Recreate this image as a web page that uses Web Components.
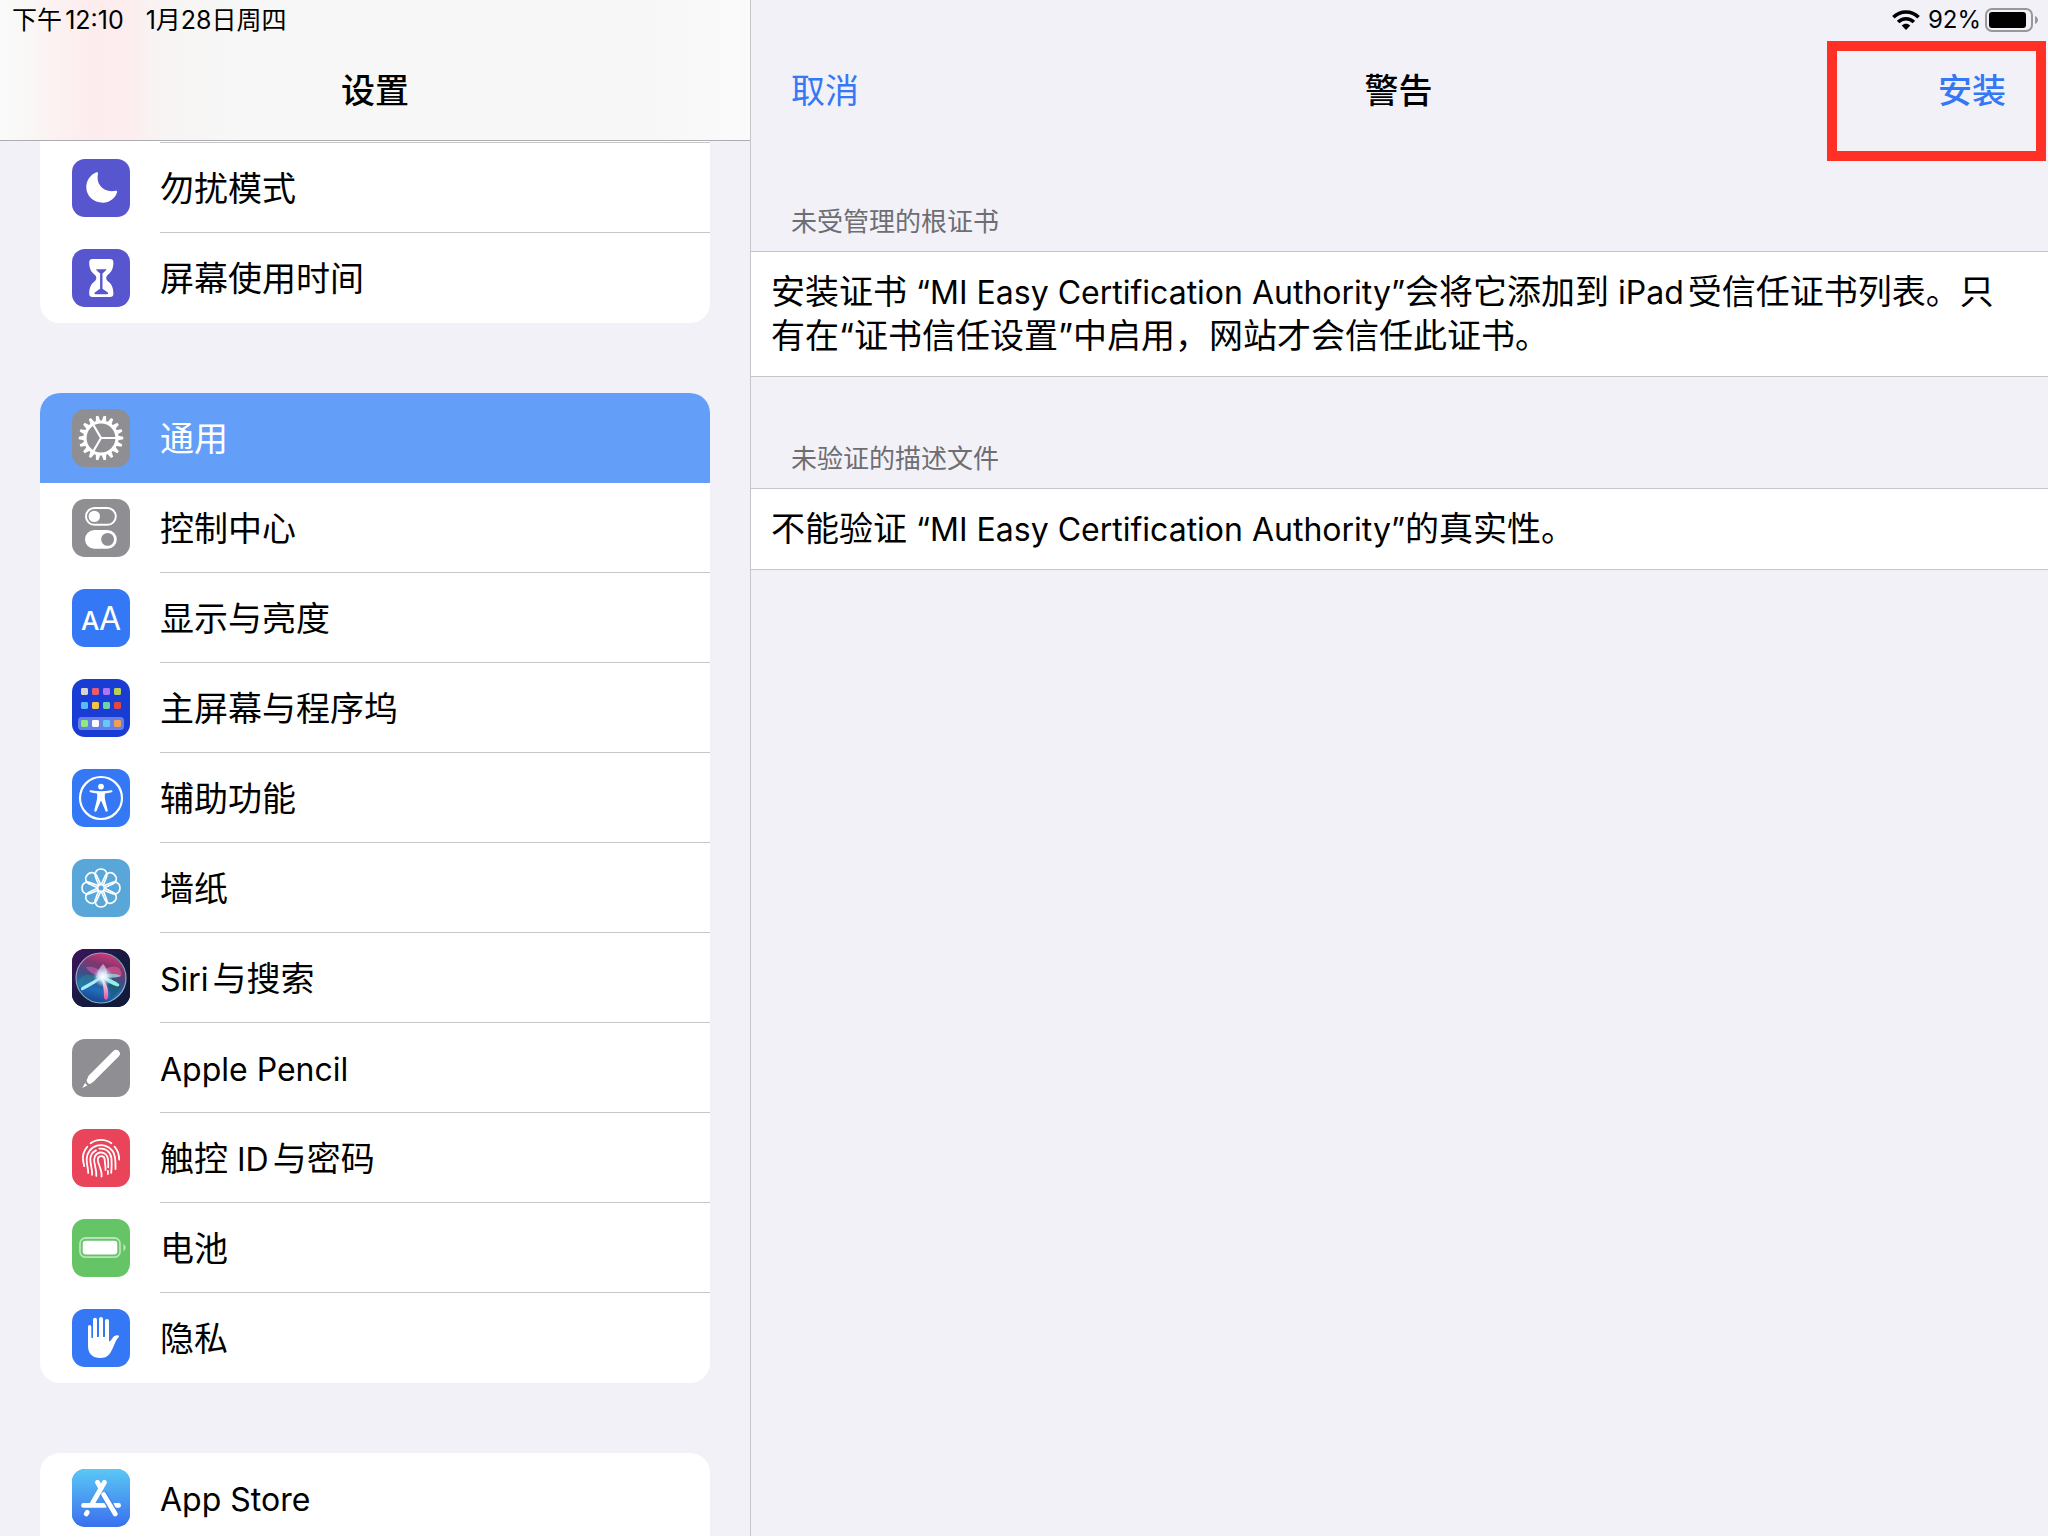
<!DOCTYPE html>
<html lang="zh-CN">
<head>
<meta charset="utf-8">
<title>设置</title>
<style>
  html, body { margin: 0; height: 100%; }
  body {
    --page: #f2f1f7;
    --line: #c6c6c8;
    --tint: #3478f6;
    --text: 34px;
    font: 34px/44px Inter, "Noto Sans CJK SC", sans-serif;
    color: #000;
    background: var(--page);
    text-autospace: normal;
    overflow: hidden;
  }
</style>
</head>
<body>
<settings-app>
  <settings-sidebar slot="sidebar">
    <status-bar slot="status"><span>下午12:10</span><span style="text-autospace: no-autospace">1月28日周四</span></status-bar>
    <span slot="title">设置</span>
    <settings-group continued>
      <settings-row icon="moon" color="#5856ce">勿扰模式</settings-row>
      <settings-row icon="hourglass" color="#5856ce" last>屏幕使用时间</settings-row>
    </settings-group>
    <settings-group>
      <settings-row icon="gear" color="#8e8e93" selected>通用</settings-row>
      <settings-row icon="toggles" color="#8e8e93">控制中心</settings-row>
      <settings-row icon="letters" color="#3478f6">显示与亮度</settings-row>
      <settings-row icon="home" color="#183cd4">主屏幕与程序坞</settings-row>
      <settings-row icon="person" color="#3478f6">辅助功能</settings-row>
      <settings-row icon="flower" color="#59a7d8">墙纸</settings-row>
      <settings-row icon="siri" color="#1b1740"><latin-text>Siri</latin-text>与搜索</settings-row>
      <settings-row icon="pencil" color="#8e8e93"><latin-text>Apple Pencil</latin-text></settings-row>
      <settings-row icon="touch" color="#ea445a">触控<latin-text>ID</latin-text>与密码</settings-row>
      <settings-row icon="battery" color="#65c466">电池</settings-row>
      <settings-row icon="hand" color="#3478f6" last>隐私</settings-row>
    </settings-group>
    <settings-group continues>
      <settings-row icon="store" color="#3f8ef2"><latin-text>App Store</latin-text></settings-row>
    </settings-group>
  </settings-sidebar>

  <warning-panel slot="detail">
    <status-bar slot="status" end><wifi-glyph></wifi-glyph><span>92%</span><battery-glyph></battery-glyph></status-bar>
    <bar-button slot="leading">取消</bar-button>
    <span slot="title">警告</span>
    <bar-button slot="trailing" strong marked>安装</bar-button>
    <notice-section>
      <span slot="heading">未受管理的根证书</span>
      安装证书<latin-text>“MI Easy Certification Authority”</latin-text>会将它添加到<latin-text>iPad</latin-text>受信任证书列表。只有在“证书信任设置”中启用，网站才会信任此证书。
    </notice-section>
    <notice-section>
      <span slot="heading">未验证的描述文件</span>
      不能验证<latin-text>“MI Easy Certification Authority”</latin-text>的真实性。
    </notice-section>
  </warning-panel>
</settings-app>

<script>
const define = (name, markup, setup) => {
  const template = document.createElement('template');
  template.innerHTML = markup;
  customElements.define(name, class extends HTMLElement {
    constructor() {
      super();
      this.attachShadow({ mode: 'open' }).append(template.content.cloneNode(true));
    }
    connectedCallback() { if (setup) setup(this, this.shadowRoot); }
  });
};

/* Gear outline with tapered teeth around a ring. */
const gearPath = (teeth, root, tip) => {
  const at = (r, a) => `${(29 + r * Math.cos(a)).toFixed(2)} ${(29 + r * Math.sin(a)).toFixed(2)}`;
  const step = Math.PI * 2 / teeth;
  const points = [];
  for (let i = 0; i < teeth; i++) {
    const a = (i + .5) * step + Math.PI / 2;
    points.push(at(root, a - step * .36), at(tip, a - step * .16), at(tip, a + step * .16), at(root, a + step * .36));
  }
  return 'M' + points.join('L') + 'Z';
};
const spin = (count, shape) => Array.from({ length: count }, (_, i) => `<g transform="rotate(${i * 360 / count} 29 29)">${shape}</g>`).join('');
const homeColors = [
  [9, '#d6d6d0', '#eb5b68', '#b074f2', '#bccf55'],
  [23, '#5ab9f8', '#f5c242', '#71d1a6', '#e2483d'],
  [41, '#8ceb79', '#ffffff', '#64c8f9', '#f09f54']
];

const icons = {
  moon: `<path fill="#fff" d="M24.6 13.3c.9-.4 1.6.3 1.4 1.2-1 4.400-.4 8.700 2.200 12.200 3.200 4.300 8.500 6.300 15.500 5.100 1-.2 1.700.5 1.400 1.400-1.900 6.200-7.700 10.500-14.300 10.500C21.500 43.700 14.300 37 14.300 28.300c0-7 4.200-12.600 10.300-15Z"/>`,
  hourglass: `<path fill="#fff" d="M20.500 10h17.500c2.200 0 3.400 1.200 3.400 3.300 0 6.500-2 9.600-5.200 12.200-2.600 2.100-2.600 4.900 0 7 3.200 2.600 5.200 5.700 5.200 12.200 0 2.100-1.200 3.300-3.400 3.300H20.500c-2.200 0-3.300-1.200-3.300-3.300 0-6.500 2-9.600 5.200-12.200 2.600-2.100 2.600-4.900 0-7-3.200-2.600-5.200-5.700-5.200-12.200 0-2.100 1.100-3.300 3.300-3.300Z"/>
    <path fill="#5856ce" d="M24 20.200h10.600c-1 1.800-2.600 2.900-4.100 4.200v15.300l5 3.600c.9.700.8 2-.4 2H23.500c-1.200 0-1.300-1.300-.4-2l5-3.600V24.400c-1.500-1.300-3.100-2.400-4.100-4.200Z"/>`,
  gear: `<path fill="#fff" fill-rule="evenodd" d="${gearPath(18, 17.600, 22.300)}M29 14.600a14.400 14.400 0 1 0 0 28.800a14.400 14.400 0 1 0 0-28.800Z"/>
    <path fill="none" stroke="#fff" stroke-width="2.200" d="M29 29H44M29 29L21.600 16.200M29 29L21.600 41.800"/>`,
  toggles: `<rect x="14" y="9" width="29.800" height="16.800" rx="8.400" fill="none" stroke="#fff" stroke-width="2"/><circle cx="22.300" cy="17.400" r="5.700" fill="#fff"/>
    <rect x="13" y="31" width="31.800" height="18.800" rx="9.400" fill="#fff"/><circle cx="35.600" cy="40.400" r="6.400" fill="#8e8e93"/>`,
  letters: `<text x="9" y="41" font-size="26" font-weight="500" fill="#fff" font-family="Inter, sans-serif">A</text><text x="27" y="41" font-size="32" font-weight="400" fill="#fff" font-family="Inter, sans-serif">A</text>`,
  home: `<rect x="6" y="38" width="46" height="13" rx="3.500" fill="#fff" opacity=".35"/>` +
    homeColors.map(([y, ...row]) => row.map((c, i) => `<rect x="${9 + i * 11}" y="${y}" width="7" height="7" rx="1.400" fill="${c}"/>`).join('')).join(''),
  person: `<circle cx="29" cy="29" r="21" fill="none" stroke="#fff" stroke-width="2.200"/><circle cx="29" cy="17.600" r="2.900" fill="#fff"/>
    <path fill="#fff" d="M18.700 21.200c3.500.6 6.900 1 10.300 1s6.800-.4 10.300-1c1.400-.2 1.700 1.700.3 2-2.300.5-4.500.9-6.600 1.200-.5 2.500-.2 5.200.4 7.600l2.300 9.300c.3 1.500-1.600 2.100-2.200.7L29.300 32h-.6l-4.200 10c-.6 1.400-2.500.8-2.200-.7l2.300-9.300c.6-2.400.9-5.100.4-7.600-2.100-.3-4.300-.7-6.600-1.200-1.400-.3-1.100-2.200.3-2Z"/>`,
  flower: `<g fill="none" stroke="#fff" stroke-width="1.600"><circle cx="29" cy="29" r="3.300"/>${spin(8, '<path d="M26.800 26.400L24 19.200C21.600 14 24.500 10 29 10S36.400 14 34 19.200L31.200 26.400"/>')}</g>`,
  siri: `<defs>
      <linearGradient id="night" x1="0" y1="0" x2="1" y2="1"><stop offset="0" stop-color="#40125f"/><stop offset=".5" stop-color="#171b40"/><stop offset="1" stop-color="#101a38"/></linearGradient>
      <linearGradient id="orb" x1=".65" y1="0" x2=".35" y2="1"><stop offset="0" stop-color="#d43a78"/><stop offset=".25" stop-color="#83356f"/><stop offset=".5" stop-color="#3c4f86"/><stop offset=".75" stop-color="#1f6fb8"/><stop offset="1" stop-color="#1c3d8c"/></linearGradient>
      <linearGradient id="rim" x1="0" y1="0" x2="1" y2="1"><stop offset="0" stop-color="#c79ccb"/><stop offset=".5" stop-color="#69a7b3"/><stop offset="1" stop-color="#a3b6e1"/></linearGradient>
      <radialGradient id="core"><stop offset="0" stop-color="#fff"/><stop offset=".4" stop-color="#e4f4ff" stop-opacity=".85"/><stop offset="1" stop-color="#9adcf4" stop-opacity="0"/></radialGradient>
      <linearGradient id="blade" x1="0" y1="0" x2="0" y2="1"><stop offset="0" stop-color="#fff"/><stop offset="1" stop-color="#ea4f9c"/></linearGradient>
    </defs>
    <rect width="58" height="58" fill="url(#night)"/><circle cx="29" cy="29" r="25" fill="url(#orb)" stroke="url(#rim)" stroke-width="1.200"/>
    <path fill="#2b8e99" opacity=".45" d="M29 28C17 24 9 25 6 33c0 3 2 6 4 8 6-3 13-7 19-13Z"/>
    <path fill="#155a66" opacity=".55" d="M34 30c6 1 12 4 15 7-2 6-6 10-10 12-1-8-3-13-5-19Z"/>
    <path fill="#db5ca7" opacity=".6" d="M14 18c9-1 16 3 18 10-8-1-15-4-18-10Z"/>
    <path fill="#e05a90" opacity=".65" d="M28 27c3-7 10-11 17-9 4 2 5 6 4 9-8 2-14 2-21 0Z"/>
    <path fill="#8fd3d8" opacity=".8" d="M29 27c8-3 15-3 20 0-5 2-14 2-20 0Z"/>
    <path fill="#8ff2dc" d="M29 26c7 3 15 6 18 9 1 2-1 3-3 2-6-2-11-5-15-11Z"/>
    <path fill="#a9edf8" d="M33 25L10 38c-2 2-1 4 1 3 8-4 17-9 22-16Z"/>
    <path fill="url(#blade)" d="M28 27c7 6 9 14 8 22-1 3-4 2-4-1 0-8-1-14-4-21Z"/>
    <path fill="#f1e3ff" opacity=".6" d="M31 15c-4 4-6 9-7 14l10-1c2-5 1-9-3-13Z"/>
    <circle cx="31" cy="28" r="10" fill="url(#core)"/>`,
  pencil: `<path fill="none" stroke="#fff" stroke-width="7.600" stroke-linecap="round" d="M44 14.800L20.500 38.300"/><path fill="#fff" d="M17.200 35.800l5.700 5.700-3.900 3c-1.200.8-2.400.3-3.200-.5s-1.400-2.200-.9-3.400ZM13.300 43.600c.2 1.300 1 2.300 2.200 2.700l-5.300 2.800Z"/>`,
  touch: `<g fill="none" stroke="#fff" stroke-width="1.800" stroke-linecap="round">
    <path d="M18.600 14.300a17.500 17.500 0 0 1 20.800 0M15.200 17.800c-3.600 4.200-4.600 8.200-4.200 12.600.2 2.600.8 4.900 1.200 6.800M42.500 17.600c3.200 3.600 4.700 8 4.700 13"/>
    <path d="M16.200 43.900c.1-4.800-1.900-8.900-1.500-14.100a14.300 14.300 0 0 1 25.800-7.900c3.500 4.600 3.100 11.300 3 18.100"/>
    <path d="M20.100 45.800c.4-5.200-1.700-10-1.800-15.400.1-4 2.200-7.400 5.700-9M27.400 19.700c6.400-.9 11.300 3.500 12 9.400.5 5.200.2 9.800-.2 14.800"/>
    <path d="M24.300 46.900c.4-5.800-1.900-10.600-2.200-16.100.1-4.300 3.200-7.400 7-7.300 4.200.1 6.700 3.400 7 7.500.1 2.300.2 4.900.1 7.300M35.900 42v3"/>
    <path d="M29.600 47.500c.7-6.600-3.500-11.500-3.800-16.500 0-5 6.500-5.200 6.900-.5.200 4.500 1 7 .8 10.500"/></g>`,
  battery: `<rect x="8" y="19" width="40" height="19.200" rx="5.500" fill="none" stroke="#fff" stroke-width="1.800" opacity=".55"/><rect x="10.700" y="21.700" width="34.600" height="13.700" rx="2.800" fill="#fff"/><path fill="#fff" opacity=".55" d="M51.300 25c3.200 1.500 3.200 5.600 0 7.100Z"/>`,
  hand: `<path fill="#fff" d="M16 17.700a1.650 1.650 0 0 1 3.300 0V28.500c0 .8 1.700.8 1.700 0V10.700a2 2 0 0 1 4 0V27.500c0 .8 2 .8 2 0V10a2 2 0 0 1 4 0V27.500c0 .8 2 .8 2 0V12a2 2 0 0 1 4 0V32.500c1.700-.2 2.400-1.700 3.200-2.900 1.500-2.600 3.500-3.500 6-3.200 1 .2 1 .9.500 1.500-3.200 3-4 7.700-6.300 12.100C37.700 46 34.600 49 28.500 49 20.500 49 16 44.600 16 37Z"/>`,
  store: `<defs><linearGradient id="sky" x1="0" y1="0" x2="0" y2="1"><stop offset="0" stop-color="#5ac8f5"/><stop offset="1" stop-color="#3a6fee"/></linearGradient></defs><rect width="58" height="58" fill="url(#sky)"/>
    <g fill="none" stroke="#fff" stroke-width="4.800" stroke-linecap="round"><path d="M32.500 13.300L20.300 34.500M11.500 36.400H33M46.600 36.400H43M15.300 43.200L14.200 45"/><path d="M25.400 13.300L29 19.500"/></g><path d="M31 24.500L43.300 45.200" stroke="#4384f0" stroke-width="7.500"/><path d="M31.600 25.500L43.300 45" stroke="#fff" stroke-width="4.800" stroke-linecap="round"/>`
};

/* Latin runs are set a step smaller so that they sit evenly beside the Chinese glyphs. */
define('latin-text', `
  <style>:host { font-size: 32px; line-height: 32px; }</style><slot></slot>`);

define('settings-icon', `
  <style>
    :host { display: block; flex: none; width: 58px; height: 58px; border-radius: 13px; overflow: hidden; }
    svg { display: block; width: 100%; height: 100%; }
  </style>
  <svg viewBox="0 0 58 58" aria-hidden="true"></svg>`,
  (el, root) => {
    el.style.background = el.getAttribute('color');
    root.querySelector('svg').innerHTML = icons[el.getAttribute('name')] || '';
  });

define('settings-row', `
  <style>
    :host { display: block; }
    a { display: flex; align-items: center; gap: 30px; height: 90px; padding-left: 32px; color: inherit; text-decoration: none; }
    .label { flex: 1; display: flex; align-items: center; box-sizing: border-box; height: 100%; padding-top: 3px; border-bottom: 1px solid var(--line); }
    :host([last]) .label, :host([selected]) .label { border-bottom-color: transparent; }
    :host([selected]) a { background: #639ff8; color: #fff; }
  </style>
  <a href="#"><settings-icon></settings-icon><span class="label"><span><slot></slot></span></span></a>`,
  (el, root) => {
    const icon = root.querySelector('settings-icon');
    icon.setAttribute('name', el.getAttribute('icon'));
    icon.setAttribute('color', el.getAttribute('color'));
    icon.connectedCallback();
    if (el.hasAttribute('selected')) root.querySelector('a').setAttribute('aria-current', 'page');
  });

define('settings-group', `
  <style>
    :host { display: block; flex: none; overflow: hidden; border-radius: 20px; background: #fff; }
    :host([continued]) { border-radius: 0 0 20px 20px; }
    :host([continues]) { border-radius: 20px 20px 0 0; }
    .tail { display: none; height: 2px; margin-left: 120px; border-bottom: 1px solid var(--line); box-sizing: border-box; }
    :host([continued]) .tail { display: block; }
  </style>
  <div class="tail"></div><slot></slot>`);

define('status-bar', `
  <style>
    :host { display: flex; align-items: center; gap: 22px; height: 40px; padding: 0 12px; font-size: 25px; line-height: 40px; }
    :host([end]) { justify-content: flex-end; gap: 4px; padding: 0 10px; font-size: 24px; }
  </style>
  <slot></slot>`);

define('wifi-glyph', `
  <style>:host { display: block; margin-right: 4px; } svg { display: block; }</style>
  <svg width="28" height="20" viewBox="0 0 28 20" role="img" aria-label="Wi-Fi"><path fill="none" stroke="#000" stroke-width="3.600" d="M1.400 7.200C8.400 .2 19.600 .2 26.600 7.200M6.100 12.100C10.600 7.600 17.400 7.600 21.900 12.100"/><path d="M14 20L9.700 15.500C12.200 13.200 15.800 13.200 18.300 15.500Z"/></svg>`);

define('battery-glyph', `
  <style>:host { display: block; } svg { display: block; }</style>
  <svg width="53" height="24" viewBox="0 0 53 24" role="img" aria-label="92%"><rect x="1" y="1" width="46" height="22" rx="6" fill="none" stroke="#98979c" stroke-width="2"/><rect x="4" y="4" width="37" height="16" rx="3" fill="#000"/><path fill="#98979c" d="M50 8c4 1.500 4 6.500 0 8Z"/></svg>`);

define('settings-sidebar', `
  <style>
    :host { display: flex; flex-direction: column; min-height: 0; overflow: hidden; }
    header { flex: none; border-bottom: 1px solid #aeadb1; background: linear-gradient(90deg, #fafafa 0, #f9f8f7 25px, #fbf2f1 55px, #fdeced 90px, #fcedee 130px, #f9f2f2 148px, #f7f5f4 170px, #f7f7f7 240px, #f7f7f7 640px, #fafafa 100%); }
    h1 { margin: 0; padding-top: 2px; font-size: var(--text); line-height: 98px; font-weight: 500; text-align: center; }
    nav { flex: 1; min-height: 0; overflow: hidden; display: flex; flex-direction: column; gap: 70px; padding: 0 40px; }
  </style>
  <header><slot name="status"></slot><h1><slot name="title"></slot></h1></header>
  <nav><slot></slot></nav>`);

define('bar-button', `
  <style>
    :host { display: block; position: relative; }
    button { display: block; border: 0; padding: 0; background: none; color: var(--tint); font: inherit; cursor: pointer; }
    :host([strong]) button { font-weight: 500; }
    .mark { display: none; }
    :host([marked]) .mark { display: block; position: absolute; inset: -28px -40px -48px -111px; border: 10px solid #ff3126; pointer-events: none; }
  </style>
  <button type="button"><slot></slot></button><div class="mark"></div>`);

define('warning-panel', `
  <style>
    :host { display: flex; flex-direction: column; min-width: 0; }
    .bar { display: grid; grid-template-columns: 1fr auto 1fr; align-items: center; box-sizing: border-box; height: 100px; padding: 2px 42px 0 40px; }
    h2 { margin: 0; font: inherit; font-weight: 500; }
    .end { justify-self: end; }
    main { display: flex; flex-direction: column; gap: 44px; padding-top: 44px; }
  </style>
  <slot name="status"></slot>
  <div class="bar"><slot name="leading"></slot><h2><slot name="title"></slot></h2><div class="end"><slot name="trailing"></slot></div></div>
  <main><slot></slot></main>`);

define('notice-section', `
  <style>
    :host { display: block; }
    h3 { margin: 0; padding: 20px 40px 11px; font-size: 26px; line-height: 36px; font-weight: 400; color: #6d6d72; }
    p { margin: 0; padding: 18px 40px 18px 20px; border: solid var(--line); border-width: 1px 0; background: #fff; }
  </style>
  <h3><slot name="heading"></slot></h3>
  <p><slot></slot></p>`);

define('settings-app', `
  <style>
    :host { display: grid; grid-template-columns: 750px minmax(0, 1fr); height: 100vh; overflow: hidden; }
    .side { display: grid; min-height: 0; }
    .detail { border-left: 1px solid var(--line); min-width: 0; }
  </style>
  <div class="side"><slot name="sidebar"></slot></div>
  <div class="detail"><slot name="detail"></slot></div>`);
</script>
</body>
</html>
